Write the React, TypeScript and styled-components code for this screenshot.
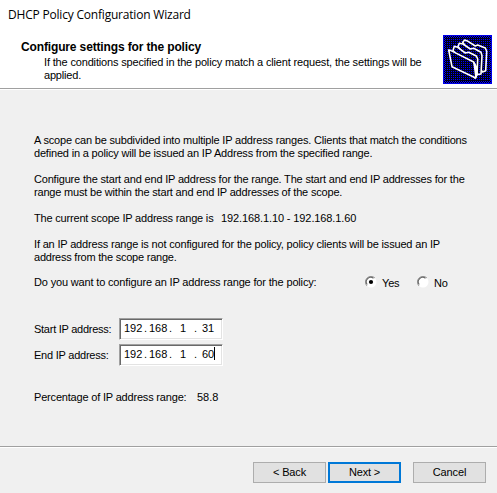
import React from "react";
import styled, { createGlobalStyle } from "styled-components";

const Global = createGlobalStyle`
  *{box-sizing:border-box}
  body{margin:0;background:#f0f0f0;overflow:hidden}
`;

const Wizard = styled.main`
  width: 497px;
  height: 493px;
  display: flex;
  flex-direction: column;
  background: #f0f0f0;
  color: #000;
  font: 11px/13px "Liberation Sans", Arial, sans-serif;
`;

const Header = styled.header`
  height: 90px;
  flex: none;
  display: flex;
  justify-content: space-between;
  padding: 5px 5px 0 8px;
  background: #fff;
  border-bottom: 1px solid #fff;
  box-shadow: inset 0 -1px #a0a0a0;
`;

const Title = styled.h1`
  margin: 0 0 17px;
  font: 12px/19px "Open Sans", "Noto Sans", sans-serif;
  letter-spacing: -0.2px;
  white-space: pre;
`;

const Heading = styled.h2`
  margin: 0 0 2px 13px;
  font-size: 12px;
  line-height: 13px;
  letter-spacing: -0.14px;
  white-space: pre;
`;

const Description = styled.div`
  margin-left: 36px;
`;

const Line = styled.div<{ $track?: number }>`
  height: 13px;
  white-space: pre;
  letter-spacing: ${(p) => p.$track ?? -0.185}px;
`;

const Icon = styled.svg`
  width: 49px;
  height: 49px;
  margin-top: 30px;
  flex: none;
`;

const Body = styled.section`
  flex: 1;
  padding: 44px 0 0 34px;
`;

const Paragraph = styled.div<{ $gap?: number }>`
  margin-bottom: ${(p) => p.$gap ?? 13}px;
  display: flex;
  flex-direction: column;
`;

const Row = styled.div<{ $height: number }>`
  display: flex;
  align-items: flex-start;
  height: ${(p) => p.$height}px;
`;

const Label = styled(Line)<{ $width: number }>`
  width: ${(p) => p.$width}px;
  flex: none;
`;

const Radio = styled.label`
  width: 52px;
  display: flex;
  gap: 5px;
`;

const RadioLabel = styled(Line)`
  padding-top: 1px;
`;

const RadioMark = styled.svg`
  width: 12px;
  height: 12px;
`;

const AddressField = styled.div`
  width: 104px;
  height: 22px;
  margin-top: -5px;
  padding: 3px 0 0 4px;
  display: flex;
  background: #fff;
  border: 1px solid;
  border-color: #a0a0a0 #fff #fff #a0a0a0;
  box-shadow: inset 1px 1px #696969, inset -1px -1px #e3e3e3;
`;

const Octet = styled.span<{ $width: number }>`
  width: ${(p) => p.$width}px;
  flex: none;
  white-space: pre;
`;

const Caret = styled.i`
  width: 1px;
  height: 13px;
  margin-top: -1px;
  background: #000;
`;

const Footer = styled.footer`
  height: 47px;
  display: flex;
  padding: 15px 11px 0 253px;
  border-top: 1px solid #a0a0a0;
  box-shadow: inset 0 1px #fff;
`;

const Button = styled.button<{ $primary?: boolean; $after?: number }>`
  width: 73px;
  height: 21px;
  flex: none;
  margin: 0 ${(p) => p.$after ?? 0}px 0 0;
  padding: 0;
  background: #e1e1e1;
  border: ${(p) => (p.$primary ? "2px solid #0078d7" : "1px solid #adadad")};
  color: #000;
  font: inherit;
  letter-spacing: -0.15px;
`;

function Folders() {
  return (
    <Icon viewBox="0 0 49 49" shapeRendering="crispEdges">
      <defs>
        <pattern id="checker" width="2" height="2" patternUnits="userSpaceOnUse">
          <path d="M0 0h2v2H0z" fill="#000" />
          <path d="M0 0h1v1H0zM1 1h1v1H1z" fill="#0000ff" />
        </pattern>
        <pattern id="dots" width="2" height="2" patternUnits="userSpaceOnUse">
          <path d="M0 0h2v2H0z" fill="#000018" />
          <path d="M0 0h1v1H0z" fill="#0000ff" />
        </pattern>
      </defs>
      <path d="M0 0h49v49H0z" fill="url(#checker)" />
      <path d="M.5.5h48v48H.5z" fill="none" stroke="#0000e8" />
      <path d="M3 3h43v43H3z" fill="url(#dots)" />
      <g fill="url(#dots)" stroke="#fff" strokeWidth="1.6" strokeLinejoin="round" shapeRendering="auto">
        <path d="M19.700 7.300 21.700 5 25 6.300 32.300 11 34.700 10 42.300 13 43.700 16.300 42.700 35.700 39.500 37Z" />
        <path d="M15 11.500 16.300 8.300 20 9 27.300 14 30.700 13.300 38 17.300 39 20.700 38 39 35 39.500Z" />
        <path d="M10 15.500 11.300 11.300 14.700 12.300 22.300 18 25.700 17.300 33.300 21 34.700 24 34 40 32 43Z" />
        <path d="M5.700 15 8 15.600 30.700 27 32.700 32 32.700 43 9 31.700Z" />
        <path d="M31 28 34 33 33 42Z" fill="#fff" />
      </g>
    </Icon>
  );
}

function RadioButton({ label, checked }: { label: string; checked?: boolean }) {
  return (
    <Radio>
      <RadioMark viewBox="0 0 12 12">
        <circle cx="6" cy="6" r="5.5" fill="#fff" />
        <path d="M2 10A5.500 5.500 0 0 1 10 2" fill="none" stroke="#a0a0a0" />
        <path d="M2.200 8.500A4.500 4.500 0 0 1 8.500 2.200" fill="none" stroke="#696969" strokeWidth="1.2" />
        {checked && <circle cx="6" cy="6" r="2.1" />}
      </RadioMark>
      <RadioLabel>{label}</RadioLabel>
    </Radio>
  );
}

function Address({ last, caret }: { last: string; caret?: boolean }) {
  return (
    <AddressField>
      <Octet $width={20}>192</Octet>
      <Octet $width={5}>.</Octet>
      <Octet $width={20}>168</Octet>
      <Octet $width={11}>.</Octet>
      <Octet $width={14}>1</Octet>
      <Octet $width={8}>.</Octet>
      <Octet $width={12}>{last}</Octet>
      {caret && <Caret />}
    </AddressField>
  );
}

export default function App() {
  return (
    <>
      <Global />
      <Wizard>
        <Header>
          <div>
            <Title>DHCP Policy Configuration Wizard</Title>
            <Heading>Configure settings for the policy</Heading>
            <Description>
              <Line $track={-0.16}>If the conditions specified in the policy match a client request, the settings will be</Line>
              <Line>applied.</Line>
            </Description>
          </div>
          <Folders />
        </Header>
        <Body>
          <Paragraph>
            <Line>A scope can be subdivided into multiple IP address ranges. Clients that match the conditions</Line>
            <Line>defined in a policy will be issued an IP Address from the specified range.</Line>
          </Paragraph>
          <Paragraph>
            <Line>Configure the start and end IP address for the range. The start and end IP addresses for the</Line>
            <Line>range must be within the start and end IP addresses of the scope.</Line>
          </Paragraph>
          <Row $height={26}>
            <Label $width={187}>The current scope IP address range is</Label>
            <Line $track={-0.11}>192.168.1.10 - 192.168.1.60</Line>
          </Row>
          <Paragraph $gap={12}>
            <Line $track={-0.175}>If an IP address range is not configured for the policy, policy clients will be issued an IP</Line>
            <Line $track={-0.23}>address from the scope range.</Line>
          </Paragraph>
          <Row $height={47}>
            <Label $width={331} $track={-0.16}>Do you want to configure an IP address range for the policy:</Label>
            <RadioButton label="Yes" checked />
            <RadioButton label="No" />
          </Row>
          <Row $height={26}>
            <Label $width={85} $track={-0.26}>Start IP address:</Label>
            <Address last="31" />
          </Row>
          <Row $height={42}>
            <Label $width={85} $track={-0.23}>End IP address:</Label>
            <Address last="60" caret />
          </Row>
          <Row $height={13}>
            <Label $width={163}>Percentage of IP address range:</Label>
            <Line $track={0}>58.8</Line>
          </Row>
        </Body>
        <Footer>
          <Button $after={2}>&lt; Back</Button>
          <Button $primary $after={12}>Next &gt;</Button>
          <Button>Cancel</Button>
        </Footer>
      </Wizard>
    </>
  );
}
